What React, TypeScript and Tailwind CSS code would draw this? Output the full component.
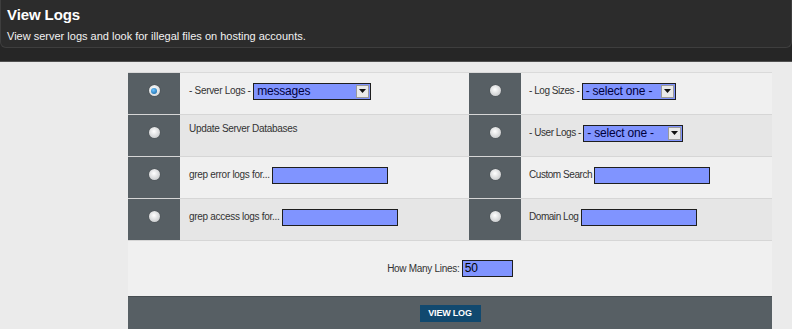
import React from 'react';

const font = "font-['Tahoma','Liberation_Sans',Arial,sans-serif]";

const Radio = ({ checked = false }: { checked?: boolean }) =>
  checked ? (
    <span className="mt-[12px] inline-flex h-[11px] w-[11px] items-center justify-center rounded-full bg-[radial-gradient(circle_at_45%_40%,#ffffff,#c9ccce)] shadow-[0_0_1px_#222]">
      <span className="h-[6px] w-[6px] rounded-full bg-[radial-gradient(circle_at_40%_35%,#6fc4ff,#0a5c9c)]" />
    </span>
  ) : (
    <span className="mt-[12px] inline-block h-[11px] w-[11px] rounded-full bg-[radial-gradient(circle_at_45%_40%,#ffffff,#b9bcbe)] shadow-[0_0_1px_#333]" />
  );

const Select = ({ value, w }: { value: string; w: string }) => (
  <span className={`inline-flex h-[17px] ${w} items-stretch overflow-hidden border border-[#1e1e1e] bg-[#8094ff] align-middle`}>
    <span className="flex-1 overflow-hidden whitespace-nowrap pl-[3px] text-[12px] leading-[15px] tracking-[-0.2px] text-[#00003a] font-['Liberation_Sans',Arial,sans-serif]">
      {value}
    </span>
    <span className="m-[1px] flex w-[13px] shrink-0 items-center justify-center border border-[#9a9a9a] bg-[#e9e9e9]">
      <svg width="7" height="4" viewBox="0 0 7 4"><path d="M0 0h7L3.5 4z" fill="#111" /></svg>
    </span>
  </span>
);

const Input = ({ w = 'w-[116px]', value = '' }: { w?: string; value?: string }) => (
  <span className={`inline-block h-[17px] ${w} border border-[#1e1e1e] bg-[#8094ff] pl-[2px] align-middle text-[12px] leading-[15px] text-black font-['Liberation_Sans',Arial,sans-serif]`}>
    {value}
  </span>
);

const rows = [
  {
    left: (
      <>
        - Server Logs - <Select value="messages" w="w-[118px]" />
      </>
    ),
    leftChecked: true,
    right: (
      <>
        - Log Sizes - <Select value="- select one -" w="w-[94px]" />
      </>
    ),
  },
  {
    left: <span className="relative top-[-4px]">Update Server Databases</span>,
    right: (
      <>
        - User Logs - <Select value="- select one -" w="w-[100px]" />
      </>
    ),
  },
  {
    left: (
      <>
        grep error logs for... <Input />
      </>
    ),
    right: (
      <>
        Custom Search <Input />
      </>
    ),
  },
  {
    left: (
      <>
        grep access logs for... <Input />
      </>
    ),
    right: (
      <>
        Domain Log <Input />
      </>
    ),
  },
];

export default function App() {
  return (
    <div className={`h-[329px] w-[792px] overflow-hidden bg-[#ebebeb] ${font}`}>
      {/* header */}
      <div className="h-[62px] border-b border-[#505050] bg-[#262626]">
        <div className="h-[48px] rounded-b-[6px] border border-t-0 border-[#3e3e3e] bg-[#2c2c2c] pl-[6px] pt-[5px] text-white">
          <h1 className="text-[15px] font-bold leading-[20px] tracking-[-0.1px]">View Logs</h1>
          <p className="mt-[5px] text-[11px] leading-[13px] text-[#f2f2f2]">
            View server logs and look for illegal files on hosting accounts.
          </p>
        </div>
      </div>

      <div className="ml-[128px] mt-[10px] w-[644px] border-t border-[#dadada] bg-[#f0f0f0] text-[10px] tracking-[-0.3px] text-[#333]">
        {rows.map((r, i) => (
          <div
            key={i}
            className={`grid h-[42px] grid-cols-[52px_289px_52px_251px] border-b ${
              i % 2 ? 'bg-[#e6e6e6]' : 'bg-[#f0f0f0]'
            } border-[#d6d6d6]`}
          >
            <div className="flex justify-center bg-[#575f64]">
              <Radio checked={r.leftChecked} />
            </div>
            <div className="whitespace-nowrap pl-[9px] pt-[9px] leading-[17px]">{r.left}</div>
            <div className="flex justify-center bg-[#575f64]">
              <Radio />
            </div>
            <div className="whitespace-nowrap pl-[8px] pt-[9px] leading-[17px] tracking-[-0.45px]">{r.right}</div>
          </div>
        ))}

        <div className="flex h-[55px] items-start justify-center pt-[19px] leading-[17px]">
          How Many Lines:&nbsp;<Input w="w-[51px]" value="50" />
        </div>

        <div className="flex h-[33px] justify-center border-t border-[#474e52] bg-[#575f64] pt-[8px]">
          <button className="h-[17px] w-[61px] bg-[#11496f] text-[9px] font-bold leading-[17px] tracking-[-0.2px] text-white">
            VIEW LOG
          </button>
        </div>
      </div>
    </div>
  );
}
